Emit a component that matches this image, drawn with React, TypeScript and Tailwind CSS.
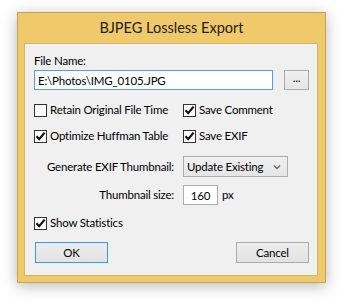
import React, { useState } from "react";

// little win8 style checkbox
const Check: React.FC<{ label: string; checked: boolean; onToggle: () => void }> = ({
  label,
  checked,
  onToggle,
}) => (
  <label className="flex items-center h-4 gap-[3px] cursor-default" onClick={onToggle}>
    <span className="w-[13px] h-[13px] border border-[#333] bg-white flex items-center justify-center shrink-0">
      {checked && (
        <svg width="11" height="11" viewBox="0 0 11 11">
          <path d="M1.5 5.3 L4.2 8.2 L9.6 1.6" fill="none" stroke="#111" strokeWidth="2.2" />
        </svg>
      )}
    </span>
    <span className="whitespace-nowrap">{label}</span>
  </label>
);

const App: React.FC = () => {
  const [opts, setOpts] = useState({
    retain: false,
    comment: true,
    huffman: true,
    exif: true,
    stats: true,
  });
  const toggle = (k: keyof typeof opts) => setOpts((o) => ({ ...o, [k]: !o[k] }));

  return (
    <div className="w-[343px] h-[304px] bg-white pt-[12px] pl-[17px] text-[11.5px] tracking-[-0.2px] text-black font-['Lato',sans-serif]">
      <div className="w-[309px] h-[271px] bg-[#f0c96b] border border-[#c4a355] flex flex-col shadow-[0_3px_14px_rgba(0,0,0,0.28)]">
        {/* title bar */}
        <div className="h-[30px] flex items-center justify-center text-[14.5px] tracking-normal text-[#222]">
          BJPEG Lossless Export
        </div>
        {/* client area */}
        <div className="ml-[6px] mr-[7px] h-[233px] bg-[#f0f0f0] border border-[#d3b46a] pl-[9px] pr-[8px] pt-[9px] flex flex-col">
          <div className="h-4 leading-4">File Name:</div>
          <div className="flex items-center mt-[1px] h-5">
            <input
              className="w-[239px] h-5 border border-[#569de5] bg-white px-[3px] outline-none"
              defaultValue="E:\Photos\IMG_0105.JPG"
            />
            <button className="ml-[11px] w-[25px] h-5 border border-[#acacac] bg-gradient-to-b from-[#f0f0f0] to-[#e5e5e5] leading-none pb-[4px]">
              ...
            </button>
          </div>

          <div className="flex mt-[12px]">
            <div className="w-[149px]">
              <Check label="Retain Original File Time" checked={opts.retain} onToggle={() => toggle("retain")} />
            </div>
            <Check label="Save Comment" checked={opts.comment} onToggle={() => toggle("comment")} />
          </div>
          <div className="flex mt-[10px]">
            <div className="w-[149px]">
              <Check label="Optimize Huffman Table" checked={opts.huffman} onToggle={() => toggle("huffman")} />
            </div>
            <Check label="Save EXIF" checked={opts.exif} onToggle={() => toggle("exif")} />
          </div>

          <div className="flex items-center mt-[12px] h-[21px]">
            <div className="w-[140px] text-right whitespace-nowrap">Generate EXIF Thumbnail:</div>
            <div className="ml-[9px] w-[105px] h-[21px] border border-[#acacac] bg-gradient-to-b from-[#f0f0f0] to-[#e5e5e5] flex items-center pl-[3px] pr-[6px]">
              <span className="flex-1 whitespace-nowrap">Update Existing</span>
              <svg width="8" height="6" viewBox="0 0 8 6">
                <path d="M1 1.5 L4 4.5 L7 1.5" fill="none" stroke="#666" strokeWidth="1.4" />
              </svg>
            </div>
          </div>

          <div className="flex items-center mt-[8px] h-5">
            <div className="w-[140px] text-right whitespace-nowrap">Thumbnail size:</div>
            <input
              className="ml-[9px] w-[35px] h-5 border border-[#abadb3] bg-white text-center outline-none"
              defaultValue="160"
            />
            <span className="ml-[4px]">px</span>
          </div>

          <div className="mt-[10px]">
            <Check label="Show Statistics" checked={opts.stats} onToggle={() => toggle("stats")} />
          </div>

          <div className="flex justify-between mt-[11px]">
            <button className="w-[73px] h-[21px] border border-[#3399ff] bg-gradient-to-b from-[#ececec] to-[#e3e3e3] ml-[1px]">
              OK
            </button>
            <button className="w-[73px] h-[21px] border border-[#acacac] bg-gradient-to-b from-[#ececec] to-[#e3e3e3]">
              Cancel
            </button>
          </div>
        </div>
      </div>
    </div>
  );
};

export default App;
